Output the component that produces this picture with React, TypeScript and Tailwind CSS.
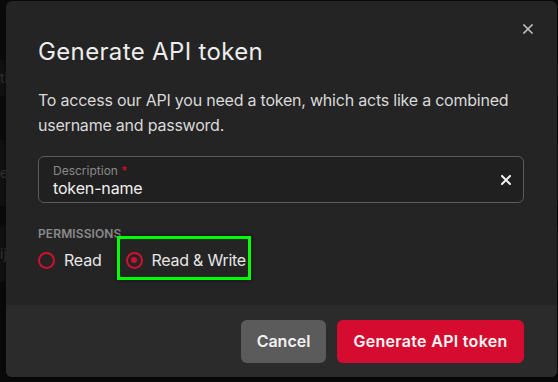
import React from "react";

function XIcon({ size, stroke, color }: { size: number; stroke: number; color: string }) {
  return (
    <svg width={size} height={size} viewBox="0 0 10 10" fill="none">
      <path d="M1 1L9 9M9 1L1 9" stroke={color} strokeWidth={stroke} strokeLinecap="square" />
    </svg>
  );
}

export default function App() {
  const font = { fontFamily: "Inter, 'Noto Sans', sans-serif" };
  return (
    <div className="relative w-[558px] h-[382px] overflow-hidden bg-[#0a0a0a]" style={font}>
      {/* background page */}
      <div className="flex flex-col">
        <div className="h-[60px] bg-[#0c0c0c]" />
        <div className="h-[36px] bg-[#121212] text-[#3a3a3a] text-[14px] leading-[36px]">tl</div>
        <div className="h-[44px] bg-[#0d0d0d]" />
        <div className="h-[66px] bg-[#131313] text-[#3a3a3a] text-[14px] leading-[66px]">e›</div>
        <div className="h-[20px] bg-[#0c0c0c]" />
        <div className="h-[56px] bg-[#121212] text-[#3a3a3a] text-[14px] leading-[56px]">ij</div>
        <div className="flex-1 bg-[#0a0a0a]" />
      </div>

      {/* modal */}
      <div className="absolute left-[6px] top-[1px] w-[551px] h-[376px] rounded-[6px] overflow-hidden bg-[#242424] flex flex-col shadow-[0_0_12px_rgba(0,0,0,0.6)]">
        <div className="relative flex-1 flex flex-col px-[32px] pt-[35px]">
          <button className="absolute left-[517px] top-[23px] w-[10px] h-[10px] flex items-center justify-center">
            <XIcon size={10} stroke={1.6} color="#bdbdbd" />
          </button>
          <h2 className="text-[24px] leading-[32px] font-normal text-[#ededed] tracking-[0.35px]">Generate API token</h2>
          <p className="mt-[20px] text-[16px] leading-[25px] text-[#d9d9d9] tracking-[-0.22px]">
            To access our API you need a token, which acts like a combined username and password.
          </p>
          <div className="mt-[18px] w-[486px] h-[47px] rounded-[6px] border border-[#5c5c5c] bg-[#202020] flex items-center pl-[14px] pr-[12px]">
            <div className="flex-1 flex flex-col pt-[2px]">
              <div className="text-[12px] leading-[15px] text-[#8a8a8a]">
                Description <span className="text-[#d50c2f]">*</span>
              </div>
              <div className="text-[16px] leading-[21px] text-[#f0f0f0] tracking-[-0.15px]">token-name</div>
            </div>
            <XIcon size={10} stroke={2} color="#f2f2f2" />
          </div>
          <div className="mt-[23px] text-[12px] leading-[16px] font-semibold text-[#8a8a8a] tracking-[0.1px]">PERMISSIONS</div>
          <div className="mt-[-6px] flex items-start">
            <div className="mt-[12px] h-[24px] flex items-center gap-[9px]">
              <span className="w-[17px] h-[17px] rounded-full border-2 border-[#d1102f]" />
              <span className="text-[16px] text-[#e6e6e6] tracking-[-0.2px]">Read</span>
            </div>
            <div className="ml-[15px] h-[44px] border-[3px] border-[#00ff00] shadow-[0_0_4px_rgba(0,0,0,0.7)] pt-[4px] pl-[6px] pr-[2px] flex items-center">
              <div className="h-[24px] flex items-center gap-[9px]">
                <span className="w-[17px] h-[17px] rounded-full border-2 border-[#d1102f] flex items-center justify-center">
                  <span className="w-[6px] h-[6px] rounded-full bg-[#d1102f]" />
                </span>
                <span className="text-[16px] text-[#e6e6e6] tracking-[-0.25px]">Read &amp; Write</span>
              </div>
            </div>
          </div>
        </div>
        <div className="h-[72px] bg-[#2b2b2b] flex items-center justify-end gap-[11px] pr-[33px]">
          <button className="w-[85px] h-[43px] rounded-[6px] bg-[#5b5b5b] text-[16px] font-semibold text-[#f2f2f2]">Cancel</button>
          <button className="w-[187px] h-[43px] rounded-[6px] bg-[#d50c2f] text-[16px] font-semibold text-[#f7f7f7] tracking-[0.3px]">Generate API token</button>
        </div>
      </div>
    </div>
  );
}
